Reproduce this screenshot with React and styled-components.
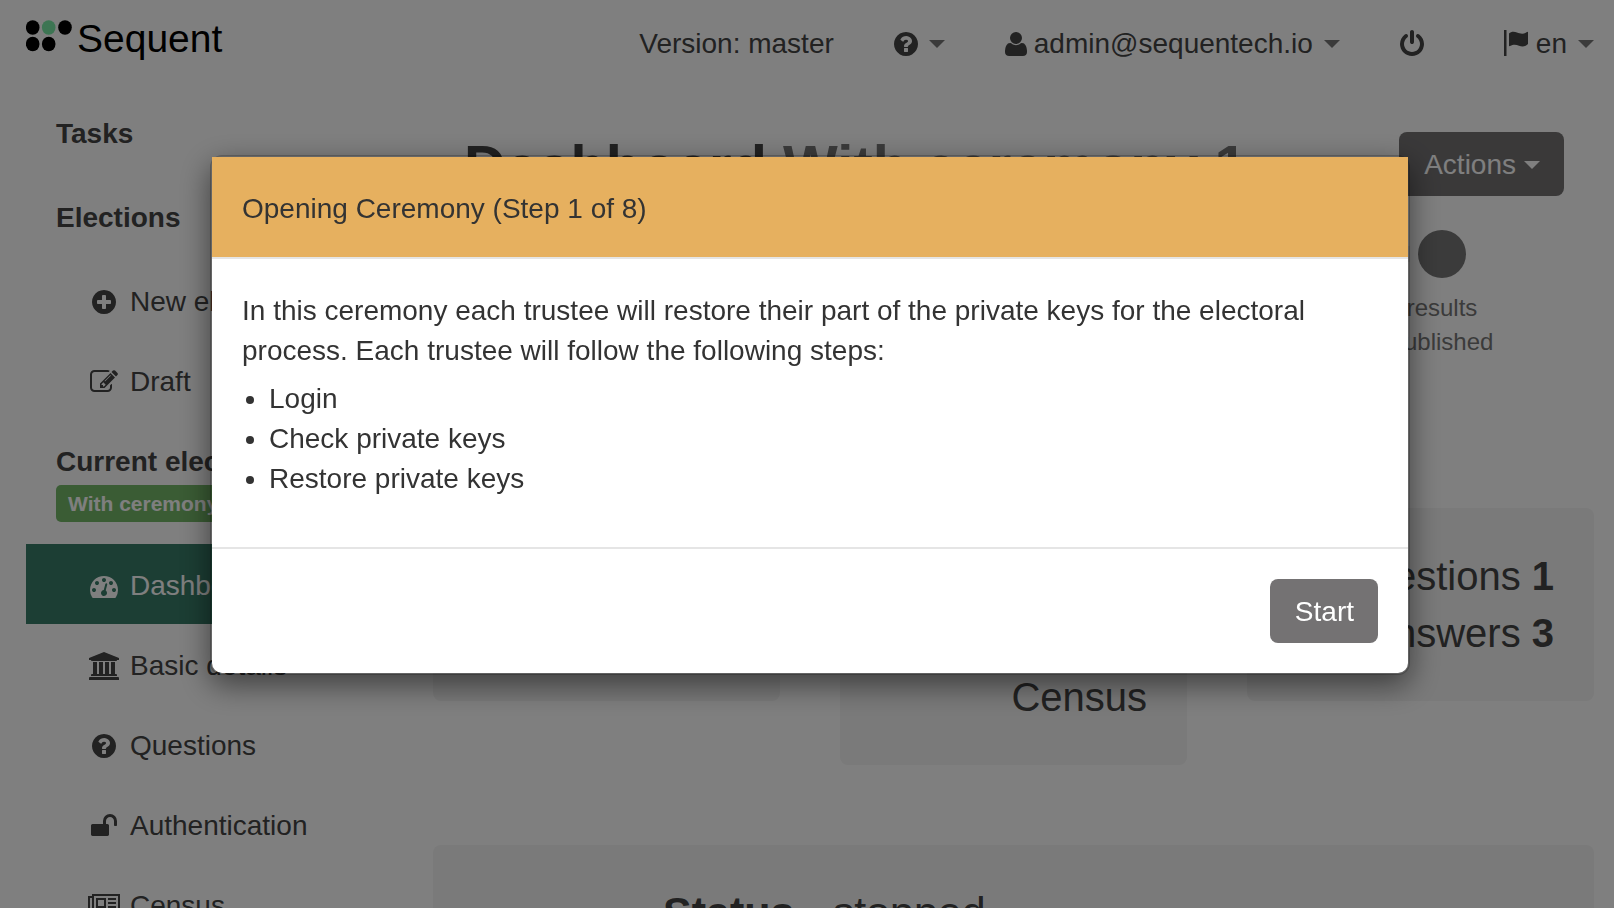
import React from "react";
import styled, { createGlobalStyle, css } from "styled-components";

const GlobalStyle = createGlobalStyle`
  *, *::before, *::after { box-sizing: border-box; }
  body {
    margin: 0;
    background: #fff;
    color: #444;
    font-family: "Liberation Sans", Arial, sans-serif;
    font-size: 28px;
    line-height: 40px;
  }
`;

const Page = styled.div`
  height: 100vh;
  overflow: hidden;
`;

/* ---------- icons ---------- */

const Svg = styled.svg`
  display: block;
  height: 28px;
  width: ${(p) => p.$width || 28}px;
  flex: none;
  fill: currentColor;
`;

const CIRCLE =
  "q0 209-103 385.5t-279.5 279.5-385.5 103-385.5-103-279.5-279.5-103-385.5 103-385.5 279.5-279.5 385.5-103 385.5 103 279.5 279.5 103 385.5z";

const ICONS = {
  question: {
    box: "128 0 1536 1792",
    width: 24,
    d:
      "M1024 1376v-192q0-14-9-23t-23-9h-192q-14 0-23 9t-9 23v192q0 14 9 23t23 9h192q14 0 23-9t9-23zm256-672q0-88-55.5-163t-138.5-116-170-41q-243 0-371 213-15 24 8 42l132 100q7 6 19 6 16 0 25-12 53-68 86-92 34-24 86-24 48 0 85.5 26t37.5 59q0 38-20 61t-68 45q-63 28-115.5 86.5t-52.5 125.5v36q0 14 9 23t23 9h192q14 0 23-9t9-23q0-19 21.5-49.5t54.5-49.5q32-18 49-28.5t46-35 44.5-48 28-60.5 12.5-81zm384 192" +
      CIRCLE,
  },
  plus: {
    box: "128 0 1536 1792",
    width: 24,
    d:
      "M1344 960v-128q0-26-19-45t-45-19h-256v-256q0-26-19-45t-45-19h-128q-26 0-45 19t-19 45v256h-256q-26 0-45 19t-19 45v128q0 26 19 45t45 19h256v256q0 26 19 45t45 19h128q26 0 45-19t19-45v-256h256q26 0 45-19t19-45zm320-64" +
      CIRCLE,
  },
  power: {
    box: "128 0 1536 1792",
    width: 24,
    d: "M1664 896q0 156-61 298t-164 245-245 164-298 61-298-61-245-164-164-245-61-298q0-182 80.5-343t226.5-270q43-32 95.5-25t83.5 50q32 42 24.5 94.5t-49.5 84.5q-98 74-151.5 181t-53.5 228q0 104 40.5 198.5t109.5 163.5 163.5 109.5 198.5 40.5 198.5-40.5 163.5-109.5 109.5-163.5 40.5-198.5q0-121-53.5-228t-151.5-181q-42-32-49.5-84.5t24.5-94.5q31-43 84-50t95 25q146 109 226.5 270t80.5 343zm-640-768v640q0 52-38 90t-90 38-90-38-38-90v-640q0-52 38-90t90-38 90 38 38 90z",
  },
  user: {
    box: "192 0 1408 1792",
    width: 22,
    d: "M1600 1405q0 120-73 189.5t-194 69.5h-874q-121 0-194-69.5t-73-189.5q0-53 3.5-103.5t14-109 26.5-108.5 43-97.5 62-81 85.5-53.5 111.5-20q9 0 42 21.5t74.5 48 108 48 133.5 21.5 133.5-21.5 108-48 74.5-48 42-21.5q61 0 111.5 20t85.5 53.5 62 81 43 97.5 26.5 108.5 14 109 3.5 103.5zm-320-893q0 159-112.5 271.5t-271.5 112.5-271.5-112.5-112.5-271.5 112.5-271.5 271.5-112.5 271.5 112.5 112.5 271.5z",
  },
  flag: {
    box: "0 0 28 28",
    width: 28,
    d: "M3 0h2.500v26h-2.500zM8 3.500C10 1.500 13 1.300 16 2.500S22.500 4.600 25.500 2.200Q27 1 27 2.500V14C24.500 16.800 21 17 18 15.800S12.500 14.300 9 16Q8 16.500 8 15.500z",
  },
  edit: {
    box: "0 0 1792 1792",
    width: 28,
    d: "M888 1184l116-116-152-152-116 116v56h96v96h56zm440-720q-16-16-33 1l-350 350q-17 17-1 33t33-1l350-350q17-17 1-33zm80 594v190q0 119-84.5 203.5t-203.5 84.5h-832q-119 0-203.5-84.5t-84.5-203.5v-832q0-119 84.5-203.5t203.5-84.5h832q63 0 117 25 15 7 18 23 3 17-9 29l-49 49q-14 14-32 8-23-6-45-6h-832q-66 0-113 47t-47 113v832q0 66 47 113t113 47h832q66 0 113-47t47-113v-126q0-13 9-22l64-64q15-15 35-7t20 29zm-96-738l288 288-672 672h-288v-288zm444 132l-92 92-288-288 92-92q28-28 68-28t68 28l152 152q28 28 28 68t-28 68z",
  },
  gauge: {
    box: "0 0 1792 1792",
    width: 28,
    d: "M384 1152q0-53-37.5-90.5t-90.5-37.5-90.5 37.5-37.5 90.5 37.5 90.5 90.5 37.5 90.5-37.5 37.5-90.5zm192-448q0-53-37.5-90.5t-90.5-37.5-90.5 37.5-37.5 90.5 37.5 90.5 90.5 37.5 90.5-37.5 37.5-90.5zm428 481l101-382q6-26-7.5-48.5t-38.5-29.5-48 6.5-30 39.5l-101 382q-60 5-107 43.5t-63 98.5q-20 77 20 146t117 89 146-20 89-117q16-60-6-117t-72-91zm660-33q0-53-37.5-90.5t-90.5-37.5-90.5 37.5-37.5 90.5 37.5 90.5 90.5 37.5 90.5-37.5 37.5-90.5zm-640-640q0-53-37.5-90.5t-90.5-37.5-90.5 37.5-37.5 90.5 37.5 90.5 90.5 37.5 90.5-37.5 37.5-90.5zm448 192q0-53-37.5-90.5t-90.5-37.5-90.5 37.5-37.5 90.5 37.5 90.5 90.5 37.5 90.5-37.5 37.5-90.5zm320 448q0 261-141 483-19 29-54 29h-1402q-35 0-54-29-141-221-141-483 0-182 71-348t191-286 286-191 348-71 348 71 286 191 191 286 71 348z",
  },
  university: {
    box: "0 0 1920 1792",
    width: 30,
    d: "M960 0l960 384v128h-128q0 26-20.5 45t-48.5 19h-1526q-28 0-48.5-19t-20.5-45h-128v-128zm-704 640h256v768h128v-768h256v768h128v-768h256v768h128v-768h256v768h59q28 0 48.5 19t20.5 45v64h-1664v-64q0-26 20.5-45t48.5-19h59v-768zm1595 960q28 0 48.5 19t20.5 45v128h-1920v-128q0-26 20.5-45t48.5-19h1782z",
  },
  unlock: {
    box: "0 0 1792 1792",
    width: 28,
    d: "M1728 576v256q0 26-19 45t-45 19h-64q-26 0-45-19t-19-45v-256q0-106-75-181t-181-75-181 75-75 181v192h96q40 0 68 28t28 68v576q0 40-28 68t-68 28h-960q-40 0-68-28t-28-68v-576q0-40 28-68t68-28h672v-192q0-185 131.5-316.5t316.5-131.5 316.5 131.5 131.5 316.5z",
  },
  newspaper: {
    box: "0 0 2048 1792",
    width: 32,
    d: "M1024 512h-384v384h384v-384zm128 640v128h-640v-128h640zm0-768v640h-640v-640h640zm640 768v128h-512v-128h512zm0-256v128h-512v-128h512zm0-256v128h-512v-128h512zm0-256v128h-512v-128h512zm-1536 960v-960h-128v960q0 26 19 45t45 19 45-19 19-45zm1664 0v-1088h-1536v1088q0 33-11 64h1483q26 0 45-19t19-45zm128-1216v1216q0 80-56 136t-136 56h-1664q-80 0-136-56t-56-136v-1088h256v-128h1792z",
  },
};

function Icon({ name }) {
  const { box, width, d } = ICONS[name];
  return (
    <Svg viewBox={box} $width={width} aria-hidden="true">
      <path d={d} />
    </Svg>
  );
}

const Caret = styled.span`
  flex: none;
  width: 16px;
  border: 8px solid transparent;
  border-top-color: ${(p) => (p.$muted ? "#777" : "currentColor")};
  border-bottom: 0;
`;

/* ---------- top bar ---------- */

const TopBar = styled.header`
  display: flex;
  justify-content: space-between;
  height: 92px;
  padding: 16px 20px 0 26px;
`;

const Brand = styled.a`
  display: flex;
  align-items: flex-start;
  gap: 5px;
  height: 48px;
  color: #000;
  font-size: 39px;
  line-height: 46px;
  text-decoration: none;
`;

const Dots = styled.svg`
  width: 46px;
  height: 32px;
  margin-top: 4px;
`;

const TopNav = styled.nav`
  display: flex;
  align-items: center;
  gap: 60px;
  height: 56px;
`;

const navPart = css`
  display: flex;
  align-items: center;
  border: 0;
  padding: 0;
  background: none;
  color: inherit;
  font: inherit;
`;

const NavText = styled.span`
  ${navPart}
`;

const NavButton = styled.button`
  ${navPart}
  gap: 7px;
  cursor: pointer;
  margin-right: ${(p) => (p.$spaced ? 17 : 0)}px;

  ${Caret} {
    margin-left: 4px;
  }
`;

/* ---------- side bar ---------- */

const Columns = styled.div`
  display: flex;
`;

const Sidebar = styled.nav`
  flex: 0 0 402px;
  padding-left: 26px;
`;

const SectionTitle = styled.h2`
  margin: 0;
  padding: 22px 30px;
  font-size: 28px;
  line-height: 40px;
`;

const CurrentElection = styled.div`
  padding: 22px 30px;
`;

const CurrentTitle = styled.h2`
  margin: 0 0 3px;
  font-size: 28px;
  line-height: 40px;
`;

const Badge = styled.span`
  display: block;
  width: fit-content;
  padding: 0 12px;
  border-radius: 5px;
  background: #75b869;
  color: #fff;
  font-size: 21px;
  font-weight: bold;
  line-height: 37px;
`;

const Menu = styled.ul`
  margin: 0;
  padding: 0;
  list-style: none;
`;

const MenuLink = styled.a`
  display: flex;
  align-items: center;
  gap: 8px;
  height: 80px;
  padding: 4px 0 0 60px;
  color: ${(p) => (p.$active ? "#fff" : "inherit")};
  background: ${(p) => (p.$active ? "#387c68" : "none")};
  text-decoration: none;
`;

const IconSlot = styled.span`
  display: flex;
  justify-content: center;
  width: 36px;
`;

function MenuItem({ icon, active, children }) {
  return (
    <li>
      <MenuLink href="#" $active={active}>
        <IconSlot>
          <Icon name={icon} />
        </IconSlot>
        {children}
      </MenuLink>
    </li>
  );
}

/* ---------- dashboard ---------- */

const Main = styled.main`
  flex: 1;
  min-width: 0;
  padding: 40px 20px 0 31px;
`;

const TitleRow = styled.div`
  display: flex;
  justify-content: space-between;
  align-items: flex-start;
  padding: 0 30px 0 31px;
`;

const Title = styled.h1`
  margin: 0;
  font-size: 58px;
  line-height: 68px;
  white-space: nowrap;
`;

const TitleNote = styled.span`
  color: #777;
`;

const Button = styled.button`
  display: flex;
  align-items: center;
  gap: 8px;
  padding: 13px 24px 11px 25px;
  border: 0;
  border-radius: 8px;
  background: #747273;
  color: #fff;
  font: inherit;
  cursor: pointer;
`;

const Steps = styled.div`
  display: flex;
  align-items: flex-start;
  padding: 30px 120px 149px 30px;
`;

const Track = styled.div`
  flex: 1;
  height: 16px;
  margin-top: 16px;
  background: #eee;
`;

const Step = styled.div`
  display: flex;
  flex-direction: column;
  align-items: center;
  width: 64px;
  color: #777;
  font-size: 24px;
  line-height: 34px;
`;

const StepDot = styled.span`
  width: 48px;
  height: 48px;
  margin-bottom: 13px;
  border-radius: 50%;
  background: #777;
`;

const Cards = styled.div`
  display: grid;
  grid-template-columns: repeat(3, 1fr);
  align-items: start;
  gap: 60px;
  margin-bottom: 80px;
`;

const Card = styled.section`
  display: flex;
  flex-direction: column;
  justify-content: flex-end;
  min-height: ${(p) => (p.$tall ? 257 : 193)}px;
  padding: 40px 40px 39px;
  border-radius: 8px;
  background: #f4f4f4;
  font-size: 40px;
  line-height: 57px;
  text-align: right;
`;

const StatusCard = styled.section`
  padding: 37px 230px;
  border-radius: 8px;
  background: #f4f4f4;
  font-size: 43px;
  line-height: 60px;
`;

/* ---------- dialog ---------- */

const Backdrop = styled.div`
  position: fixed;
  inset: 0;
  display: flex;
  justify-content: center;
  align-items: flex-start;
  padding: 155px 20px 0 26px;
  background: rgba(0, 0, 0, 0.5);
`;

const Dialog = styled.div`
  width: 1200px;
  max-width: 100%;
  border: 2px solid rgba(0, 0, 0, 0.2);
  border-radius: 12px;
  background: #fff;
  background-clip: padding-box;
  box-shadow: 0 10px 30px rgba(0, 0, 0, 0.5);
  color: #333;
`;

const DialogHeader = styled.h2`
  margin: 0;
  padding: 32px 30px 28px;
  border-bottom: 2px solid #e5e5e5;
  background: #e6b05f;
  font-size: 28px;
  font-weight: normal;
  line-height: 40px;
`;

const DialogBody = styled.div`
  padding: 32px 30px 48px;
`;

const Paragraph = styled.p`
  margin: 0 0 8px;
`;

const StepList = styled.ul`
  margin: 0;
  padding-left: 27px;
`;

const DialogFooter = styled.div`
  display: flex;
  justify-content: flex-end;
  padding: 30px;
  border-top: 2px solid #e5e5e5;
`;

export default function App() {
  return (
    <Page>
      <GlobalStyle />
      <TopBar>
        <Brand href="#">
          <Dots viewBox="0 0 46 32" aria-hidden="true">
            <ellipse cx="6.700" cy="7.500" rx="6.800" ry="7.300" />
            <ellipse cx="22.700" cy="7.500" rx="6.800" ry="7.300" fill="#7aeaa6" />
            <ellipse cx="39" cy="7.500" rx="6.800" ry="7.300" />
            <ellipse cx="6.700" cy="24" rx="6.800" ry="7.300" />
            <ellipse cx="22.700" cy="24" rx="6.800" ry="7.300" />
          </Dots>
          Sequent
        </Brand>
        <TopNav>
          <NavText>Version: master</NavText>
          <NavButton type="button" aria-label="Help">
            <Icon name="question" />
            <Caret $muted />
          </NavButton>
          <NavButton type="button">
            <Icon name="user" />
            admin@sequentech.io
            <Caret $muted />
          </NavButton>
          <NavButton type="button" aria-label="Log out" $spaced>
            <Icon name="power" />
          </NavButton>
          <NavButton type="button">
            <Icon name="flag" />
            en
            <Caret $muted />
          </NavButton>
        </TopNav>
      </TopBar>

      <Columns>
        <Sidebar>
          <SectionTitle>Tasks</SectionTitle>
          <SectionTitle>Elections</SectionTitle>
          <Menu>
            <MenuItem icon="plus">New election</MenuItem>
            <MenuItem icon="edit">Draft</MenuItem>
          </Menu>
          <CurrentElection>
            <CurrentTitle>Current election</CurrentTitle>
            <Badge>With ceremony 1</Badge>
          </CurrentElection>
          <Menu>
            <MenuItem icon="gauge" active>Dashboard</MenuItem>
            <MenuItem icon="university">Basic details</MenuItem>
            <MenuItem icon="question">Questions</MenuItem>
            <MenuItem icon="unlock">Authentication</MenuItem>
            <MenuItem icon="newspaper">Census</MenuItem>
          </Menu>
        </Sidebar>

        <Main>
          <TitleRow>
            <Title>
              Dashboard <TitleNote>With ceremony 1</TitleNote>
            </Title>
            <Button type="button">
              Actions <Caret />
            </Button>
          </TitleRow>
          <Steps>
            <Track />
            <Step>
              <StepDot />
              <span>results</span>
              <span>published</span>
            </Step>
          </Steps>
          <Cards>
            <Card />
            <Card $tall>
              <span>Census</span>
            </Card>
            <Card>
              <span>
                Questions <b>1</b>
              </span>
              <span>
                Answers <b>3</b>
              </span>
            </Card>
          </Cards>
          <StatusCard>
            <b>Status</b> - stopped
          </StatusCard>
        </Main>
      </Columns>

      <Backdrop>
        <Dialog role="dialog" aria-modal="true" aria-labelledby="dialog-title">
          <DialogHeader id="dialog-title">Opening Ceremony (Step 1 of 8)</DialogHeader>
          <DialogBody>
            <Paragraph>
              In this ceremony each trustee will restore their part of the private keys for the
              electoral process. Each trustee will follow the following steps:
            </Paragraph>
            <StepList>
              <li>Login</li>
              <li>Check private keys</li>
              <li>Restore private keys</li>
            </StepList>
          </DialogBody>
          <DialogFooter>
            <Button type="button">Start</Button>
          </DialogFooter>
        </Dialog>
      </Backdrop>
    </Page>
  );
}
